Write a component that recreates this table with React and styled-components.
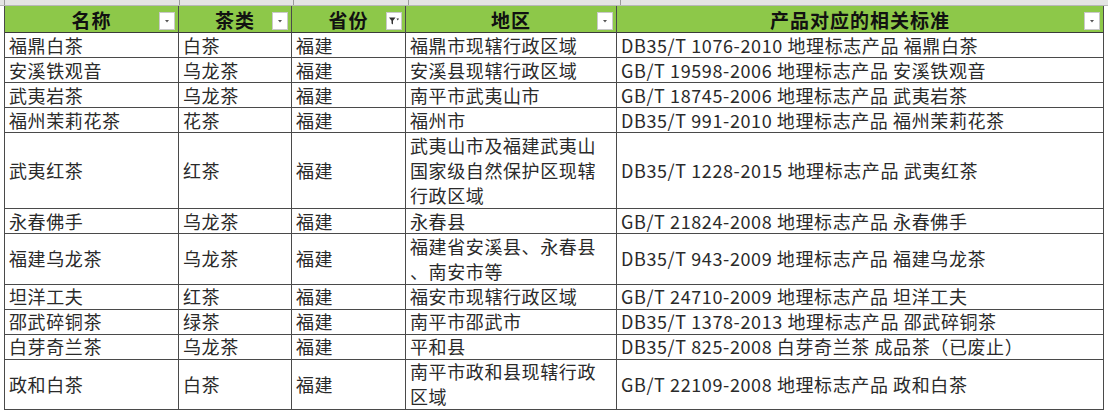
import React from "react";
import styled, { createGlobalStyle } from "styled-components";

const GlobalStyle = createGlobalStyle`
  html, body {
    margin: 0;
    padding: 0;
    background: #ffffff;
  }
  body {
    font-family: "Noto Sans CJK SC", "Noto Sans", sans-serif;
  }
`;

const columns = [
  { key: "name", title: "名称", width: 174 },
  { key: "type", title: "茶类", width: 113 },
  { key: "province", title: "省份", width: 114, filtered: true },
  { key: "area", title: "地区", width: 211 },
  { key: "standard", title: "产品对应的相关标准", width: 487 },
];

const rows = [
  { lines: 1, name: "福鼎白茶", type: "白茶", area: ["福鼎市现辖行政区域"], standard: "DB35/T 1076-2010 地理标志产品 福鼎白茶" },
  { lines: 1, name: "安溪铁观音", type: "乌龙茶", area: ["安溪县现辖行政区域"], standard: "GB/T 19598-2006 地理标志产品 安溪铁观音" },
  { lines: 1, name: "武夷岩茶", type: "乌龙茶", area: ["南平市武夷山市"], standard: "GB/T 18745-2006 地理标志产品 武夷岩茶" },
  { lines: 1, name: "福州茉莉花茶", type: "花茶", area: ["福州市"], standard: "DB35/T 991-2010 地理标志产品 福州茉莉花茶" },
  {
    lines: 3,
    name: "武夷红茶",
    type: "红茶",
    area: ["武夷山市及福建武夷山", "国家级自然保护区现辖", "行政区域"],
    standard: "DB35/T 1228-2015 地理标志产品 武夷红茶",
  },
  { lines: 1, name: "永春佛手", type: "乌龙茶", area: ["永春县"], standard: "GB/T 21824-2008 地理标志产品 永春佛手" },
  {
    lines: 2,
    name: "福建乌龙茶",
    type: "乌龙茶",
    area: ["福建省安溪县、永春县", "、南安市等"],
    standard: "DB35/T 943-2009 地理标志产品 福建乌龙茶",
  },
  { lines: 1, name: "坦洋工夫", type: "红茶", area: ["福安市现辖行政区域"], standard: "GB/T 24710-2009 地理标志产品 坦洋工夫" },
  { lines: 1, name: "邵武碎铜茶", type: "绿茶", area: ["南平市邵武市"], standard: "DB35/T 1378-2013 地理标志产品 邵武碎铜茶" },
  { lines: 1, name: "白芽奇兰茶", type: "乌龙茶", area: ["平和县"], standard: "DB35/T 825-2008 白芽奇兰茶 成品茶（已废止）" },
  {
    lines: 2,
    name: "政和白茶",
    type: "白茶",
    area: ["南平市政和县现辖行政", "区域"],
    standard: "GB/T 22109-2008 地理标志产品 政和白茶",
  },
];

const ColumnStrip = styled.div`
  height: 6px;
  background: #e4e4e4;
  display: flex;
  padding-left: 4px;
  border-bottom: 1px solid #b8b8b8;
  box-sizing: border-box;
`;

const StripCell = styled.div`
  width: ${(p) => p.$w}px;
  border-left: 1px solid #9a9a9a;
  flex: none;
`;

const Sheet = styled.div`
  display: grid;
  grid-template-columns: ${columns.map((c) => `${c.width}px`).join(" ")};
  margin-left: 4px;
  width: max-content;
  border-left: 1px solid #4a4a4a;
`;

const HeaderCell = styled.div`
  position: relative;
  height: 27px;
  box-sizing: border-box;
  background: #8dc849;
  border-right: 1px solid #4a4a4a;
  border-bottom: 1px solid #3a3a3a;
  display: flex;
  align-items: center;
  justify-content: center;
  font-size: 19px;
  font-weight: 700;
  color: #111111;
  letter-spacing: 1px;
`;

const FilterButton = styled.div`
  position: absolute;
  right: 3px;
  bottom: 2px;
  width: 16px;
  height: 18px;
  background: #ffffff;
  border: 1px solid #c9c9c9;
  box-sizing: border-box;
  display: flex;
  align-items: center;
  justify-content: center;
`;

const Cell = styled.div`
  height: ${(p) => p.$lines * 25 + (p.$lines - 1) * 0.5}px;
  box-sizing: border-box;
  border-right: 1px solid #4a4a4a;
  border-bottom: 1px solid #4a4a4a;
  padding-left: 4px;
  display: flex;
  flex-direction: column;
  justify-content: center;
  font-size: 18px;
  line-height: 25px;
  letter-spacing: 0.6px;
  color: #2a2a2a;
  white-space: nowrap;
  overflow: hidden;
`;

const Line = styled.span`
  display: block;
`;

const DropArrow = () => (
  <svg width="8" height="6" viewBox="0 0 8 6">
    <path d="M2 2 L6 2 L4 4.5 Z" fill="#555" />
  </svg>
);

const FunnelIcon = () => (
  <svg width="12" height="10" viewBox="0 0 12 10">
    <path d="M1 1.5 H7.5 L5 4.8 V8.5 L3.5 7.5 V4.8 Z" fill="#333" />
    <path d="M8.5 2.5 L11 2.5 L9.75 4.5 Z" fill="#333" />
  </svg>
);

export default function App() {
  return (
    <>
      <GlobalStyle />
      <ColumnStrip>
        {columns.map((c) => (
          <StripCell key={c.key} $w={c.width} />
        ))}
      </ColumnStrip>
      <Sheet>
        {columns.map((c) => (
          <HeaderCell key={c.key}>
            {c.title}
            <FilterButton>{c.filtered ? <FunnelIcon /> : <DropArrow />}</FilterButton>
          </HeaderCell>
        ))}
        {rows.map((r) => (
          <React.Fragment key={r.name}>
            <Cell $lines={r.lines}>{r.name}</Cell>
            <Cell $lines={r.lines}>{r.type}</Cell>
            <Cell $lines={r.lines}>福建</Cell>
            <Cell $lines={r.lines}>
              {r.area.map((l) => (
                <Line key={l}>{l}</Line>
              ))}
            </Cell>
            <Cell $lines={r.lines}>{r.standard}</Cell>
          </React.Fragment>
        ))}
      </Sheet>
    </>
  );
}
